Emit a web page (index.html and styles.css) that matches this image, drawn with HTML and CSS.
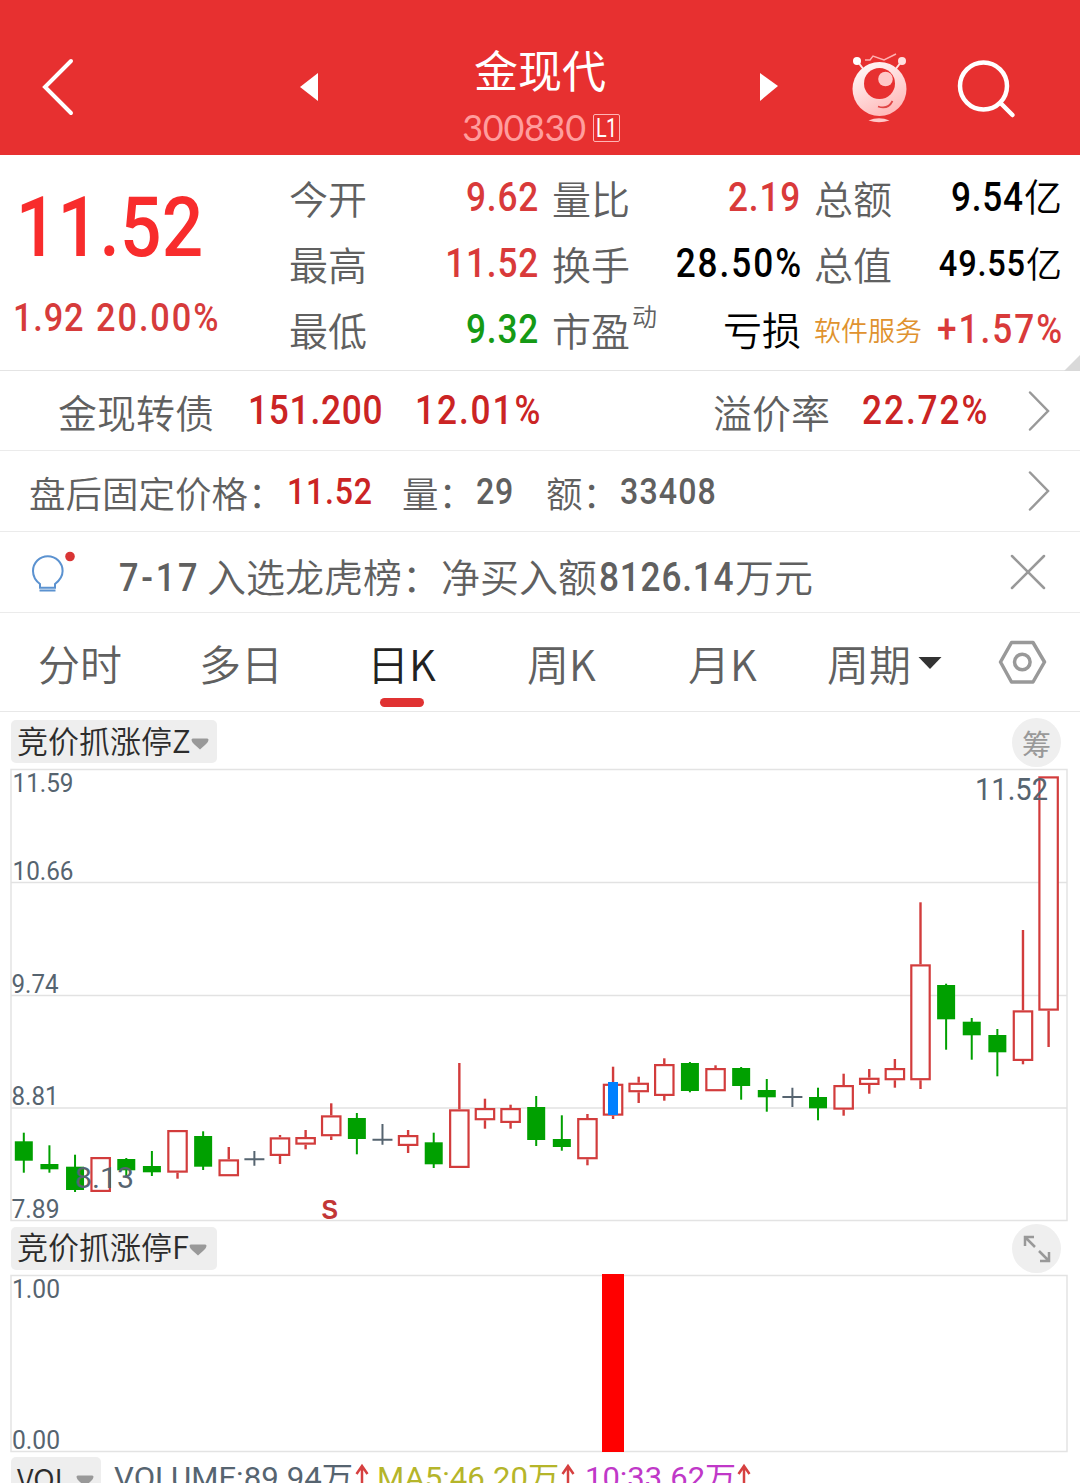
FILE: index.html
```html
<!DOCTYPE html>
<html lang="zh-CN">
<head>
  <meta charset="UTF-8">
  <title>金现代 300830</title>
  <link rel="stylesheet" href="styles.css">
</head>
<body>
  <header class="topbar">
    <svg class="back" width="34" height="58" viewBox="0 0 34 58"><path d="M30 3 L4 29 L30 55"/></svg>
    <svg class="prev" width="20" height="30" viewBox="0 0 20 30"><path d="M19 1 V29 L1 15 Z"/></svg>
    <div class="title">
      <h1>金现代</h1>
      <div class="code">300830<span class="level"><b>L1</b></span></div>
    </div>
    <svg class="next" width="20" height="30" viewBox="0 0 20 30"><path d="M1 1 V29 L19 14 Z"/></svg>
    <svg class="robot" width="56" height="70" viewBox="852 53 56 70">
      <defs>
        <linearGradient id="skin" x1="0" y1="0" x2="0.5" y2="1">
          <stop offset="0" stop-color="#fff"/>
          <stop offset="1" stop-color="#ffbcbc"/>
        </linearGradient>
      </defs>
      <path d="M858 63 L864 71 M901 63 L895 71" fill="none" stroke="#ffe4e4" stroke-width="2"/>
      <path d="M865 61 h5 l3 -4 l11 4 l12 -6" fill="none" stroke="#ffb0b0" stroke-width="1.4"/>
      <circle cx="857" cy="62" r="4" fill="#fff"/>
      <circle cx="902" cy="62" r="4" fill="#ffe0e0"/>
      <circle cx="879.5" cy="90" r="27" fill="url(#skin)"/>
      <circle cx="879.5" cy="84.5" r="15.5" fill="#e73030"/>
      <circle cx="885.5" cy="80" r="7.3" fill="#ffc8c8"/>
      <path d="M878 107.500 Q888 111 892.500 102" fill="none" stroke="#e04545" stroke-width="1.7"/>
      <path d="M868.500 121.500 Q879 117 889.500 121.500 Q879 125 868.500 121.500" fill="#ffc8c8"/>
    </svg>
    <svg class="search" width="60" height="60" viewBox="956 58 60 60"><circle cx="983.500" cy="86" r="23.500"/><path d="M1000.500 103 L1012.500 115"/></svg>
  </header>

  <section class="quote">
    <div class="price">
      <div class="last num">11.52</div>
      <div class="change"><span class="num">1.92</span><span class="num pct">20.00%</span></div>
    </div>
    <dl class="stats">
      <dt>今开</dt><dd class="num up">9.62</dd>
      <dt>量比</dt><dd class="num up">2.19</dd>
      <dt>总额</dt><dd><b class="num">9.54</b><i>亿</i></dd>
      <dt>最高</dt><dd class="num up">11.52</dd>
      <dt>换手</dt><dd class="num pct">28.50%</dd>
      <dt>总值</dt><dd class="small"><b class="num">49.55</b><i>亿</i></dd>
      <dt>最低</dt><dd class="num down">9.32</dd>
      <dt>市盈<sup>动</sup></dt><dd class="cn">亏损</dd>
      <dt class="sector">软件服务</dt><dd class="num pct up">+1.57%</dd>
    </dl>
    <span class="corner"></span>
  </section>

  <section class="row bond">
    <span class="bond-name">金现转债</span>
    <span class="num red bond-price">151.200</span>
    <span class="num pct red bond-pct">12.01%</span>
    <span class="premium">溢价率</span>
    <span class="num pct red premium-pct">22.72%</span>
    <svg class="icon" width="22" height="40" viewBox="0 0 22 40"><path d="M2 1.500 L20 20 L2 38.500"/></svg>
  </section>

  <section class="row after">
    <span class="after-name">盘后固定价格：</span>
    <span class="num red after-price">11.52</span>
    <span class="after-vol">量：</span>
    <span class="num after-vol-num">29</span>
    <span class="after-amt">额：</span>
    <span class="num after-amt-num">33408</span>
    <svg class="icon" width="22" height="40" viewBox="0 0 22 40"><path d="M2 1.500 L20 20 L2 38.500"/></svg>
  </section>

  <section class="row news">
    <svg class="bulb" width="48" height="44" viewBox="30 550 48 44">
      <path d="M40 587.500 V584 C36 581 33 577 33 571 A14.800 14.800 0 0 1 62.600 571 C62.600 577 59 581 55 584 V587.500 M39 587.700 H56 M39.500 590.500 H55.500"/>
      <circle cx="70" cy="556.5" r="4.8"/>
    </svg>
    <span class="num news-date">7-17</span>
    <span class="news-text">入选龙虎榜：净买入额</span>
    <span class="num news-amount">8126.14</span>
    <span>万元</span>
    <svg class="icon" width="36" height="36" viewBox="0 0 36 36"><path d="M2 2 L34 34 M34 2 L2 34"/></svg>
  </section>

  <nav class="tabs">
    <a>分时</a>
    <a>多日</a>
    <a class="active">日<em>K</em></a>
    <a>周<em>K</em></a>
    <a>月<em>K</em></a>
    <a>周期<svg width="24" height="12" viewBox="0 0 24 12"><path d="M0.500 0 H23.500 L12 12 Z" fill="#333"/></svg></a>
    <svg class="settings" width="48" height="44" viewBox="998 640 48 44"><path d="M1011.500 642.500 H1033 L1044.500 662 L1033 682 H1011.500 L1000.500 662 Z"/><circle cx="1022.3" cy="662" r="7.8"/></svg>
  </nav>

  <section class="panel">
    <div class="panel-head first">
      <button class="chip">竞价抓涨停<em>Z</em><svg width="18" height="12" viewBox="0 0 18 12"><path d="M0.500 1.500 Q1 0.500 2 0.500 H16 Q17 0.500 17.500 1.500 Q17.500 4 14 7 L9 11.500 L4 7 Q0.500 4 0.500 1.500"/></svg></button>
      <span class="round">筹</span>
    </div>
    <svg id="kline" width="1080" height="453" viewBox="0 769 1080 453"></svg>
  </section>

  <section class="panel">
    <div class="panel-head second">
      <button class="chip">竞价抓涨停<em>F</em><svg width="18" height="12" viewBox="0 0 18 12"><path d="M0.500 1.500 Q1 0.500 2 0.500 H16 Q17 0.500 17.500 1.500 Q17.500 4 14 7 L9 11.500 L4 7 Q0.500 4 0.500 1.500"/></svg></button>
      <span class="round"><svg width="28" height="28" viewBox="0 0 28 28"><path d="M2 11 V2 H11 M2 2 L12 12 M26 17 V26 H17 M26 26 L16 16"/></svg></span>
    </div>
    <svg id="signal" width="1080" height="180" viewBox="0 1273 1080 180"></svg>
  </section>

  <section class="volume">
    <button class="chip"><em>VOL</em><svg width="18" height="12" viewBox="0 0 18 12"><path d="M0.500 1.500 Q1 0.500 2 0.500 H16 Q17 0.500 17.500 1.500 Q17.500 4 14 7 L9 11.500 L4 7 Q0.500 4 0.500 1.500"/></svg></button>
    <svg id="volume" width="979" height="30" viewBox="101 1453 979 30"></svg>
  </section>

  <script>
    // u = up, d = down, x = unchanged; then high, body top, body bottom, low
    const candles = [
      ["d", 1132.7, 1141.3, 1160.7, 1172.7],
      ["d", 1145.3, 1164, 1169.3, 1172.7],
      ["d", 1154.7, 1166.7, 1190, 1192],
      ["u", 1157, 1157, 1192, 1192],
      ["d", 1158, 1159, 1170.3, 1176],
      ["d", 1151, 1166, 1172.3, 1176],
      ["u", 1130, 1130, 1172.7, 1178.7],
      ["d", 1131.3, 1136, 1166.7, 1170],
      ["u", 1147, 1159.3, 1176.3, 1176.3],
      ["x", 1151, 1159.3, 1159.3, 1165.7],
      ["u", 1135, 1137.3, 1156, 1164],
      ["u", 1130, 1137, 1144.7, 1149.3],
      ["u", 1103.3, 1115.3, 1136.3, 1140],
      ["d", 1113, 1118, 1139, 1154.3],
      ["x", 1124, 1139.7, 1139.7, 1144.7],
      ["u", 1130, 1135, 1146, 1153],
      ["d", 1132.7, 1142.3, 1164.3, 1168],
      ["u", 1063, 1109.3, 1168, 1168],
      ["u", 1098.7, 1108, 1120.3, 1128.7],
      ["u", 1104.7, 1108, 1123, 1128.7],
      ["d", 1096, 1107, 1140, 1146],
      ["d", 1115.3, 1139, 1147, 1150.7],
      ["u", 1114, 1118, 1159.3, 1165.3],
      ["u", 1066.7, 1083.7, 1115.7, 1119],
      ["u", 1076.7, 1082.7, 1092.3, 1103],
      ["u", 1058.3, 1064, 1096, 1100.7],
      ["d", 1062, 1063, 1091, 1092.3],
      ["u", 1065.3, 1068, 1091.3, 1091.3],
      ["d", 1067, 1068, 1086, 1099.7],
      ["d", 1079, 1090, 1097.3, 1111.7],
      ["x", 1087.7, 1097, 1097, 1107],
      ["d", 1087.7, 1097, 1108.3, 1120.3],
      ["u", 1073.7, 1085, 1109.7, 1115.7],
      ["u", 1069, 1077.7, 1085, 1093.7],
      ["u", 1059, 1068, 1080.3, 1087.7],
      ["u", 902.3, 964.3, 1080.3, 1089],
      ["d", 983.7, 985, 1019.3, 1049.7],
      ["d", 1018, 1021.7, 1035.3, 1059.7],
      ["d", 1029, 1035, 1052.3, 1076.3],
      ["u", 930, 1010.3, 1061, 1064.3],
      ["u", 776.3, 776.3, 1010.7, 1047]
    ];

    function rect(x, y, w, h, cls) {
      return `<rect class="${cls}" x="${x}" y="${y}" width="${w}" height="${h}"/>`;
    }
    function text(x, y, w, size, str, cls) {
      return `<text class="${cls}" x="${x}" y="${y}" font-size="${size}" textLength="${w}" lengthAdjust="spacingAndGlyphs">${str}</text>`;
    }

    function drawKline() {
      let out = rect(11, 769.5, 1056, 451, "frame");
      for (const y of [882.5, 995.5, 1108]) {
        out += `<path class="grid" d="M11 ${y} H1067"/>`;
      }
      candles.forEach(([type, high, top, bottom, low], i) => {
        const x = 23.8 + i * 25.62;
        if (type === "d") {
          out += rect(x - 1, high, 2, low - high, "fall") + rect(x - 9, top, 18, bottom - top, "fall");
        } else if (type === "u") {
          out += rect(x - 1.2, high, 2.4, top - high, "wick") + rect(x - 1.2, bottom, 2.4, low - bottom, "wick");
          out += rect(x - 9.2, top + 1.1, 18.4, bottom - top - 2.2, "rise");
        } else {
          out += `<path class="flat" d="M${x} ${high} V${low} M${x - 10} ${top} H${x + 10}"/>`;
        }
      });
      out += rect(608, 1082, 10, 33, "mark");
      out += text(12.5, 792, 61, 25.5, "11.59", "axis");
      out += text(12.5, 880, 61, 25.5, "10.66", "axis");
      out += text(11.5, 993, 47, 25.5, "9.74", "axis");
      out += text(11.5, 1105, 47, 25.5, "8.81", "axis");
      out += text(11.5, 1218, 48, 25.5, "7.89", "axis");
      out += text(75, 1188, 59, 30, "8.13", "axis");
      out += text(975, 800, 73, 31, "11.52", "axis");
      out += text(321.5, 1219, 16.5, 27, "S", "sell");
      document.getElementById("kline").innerHTML = out;
    }

    function drawSignal() {
      let out = rect(11, 1275.5, 1056, 176, "frame");
      out += rect(602, 1274, 22, 178, "bar");
      out += text(12, 1298, 48, 25.5, "1.00", "axis");
      out += text(12, 1449, 48, 25.5, "0.00", "axis");
      document.getElementById("signal").innerHTML = out;
    }

    function drawVolume() {
      let out = text(114, 1488, 239, 29, "VOLUME:89.94万", "axis");
      out += text(377, 1488, 182, 29, "MA5:46.20万", "ma5");
      out += text(585, 1488, 151, 29, "10:33.62万", "ma10");
      for (const x of [362, 568, 744]) {
        out += `<path class="arrow" d="M${x} 1490 V1466 M${x - 5.5} 1474 L${x} 1466 L${x + 5.5} 1474"/>`;
      }
      document.getElementById("volume").innerHTML = out;
    }

    drawKline();
    drawSignal();
    drawVolume();
  </script>
</body>
</html>
```

FILE: styles.css
```css
* {
  box-sizing: border-box;
}

body {
  margin: 0;
  width: 1080px;
  height: 1483px;
  overflow: hidden;
  background: #fff;
  color: #606060;
  font-family: "Noto Sans CJK SC", sans-serif;
  font-weight: 350;
}

svg {
  display: block;
  flex: none;
  overflow: visible;
}

em, i {
  font-style: normal;
}

/* narrow, slightly spaced digits */
.num {
  font-family: Roboto, "Noto Sans CJK SC", sans-serif;
  font-weight: 500;
  letter-spacing: 0.9px;
  white-space: nowrap;
  transform: scaleX(0.88);
  transform-origin: left;
}

.num.pct {
  letter-spacing: 2.2px;
}

.topbar {
  display: flex;
  height: 155px;
  padding-top: 40px;
  background: #e73030;
  color: #fff;
}

.back {
  margin: 18px 0 0 41px;
  fill: none;
  stroke: #fff;
  stroke-width: 4;
  stroke-linecap: round;
}

.prev, .next {
  margin-top: 32px;
  fill: #fff;
}

.prev {
  margin-left: 224px;
}

.title {
  width: 440px;
  text-align: center;
}

.title h1 {
  margin: -2px 0 0 2px;
  font-size: 44px;
  font-weight: 400;
  line-height: 62px;
}

.code {
  display: flex;
  justify-content: center;
  margin: 7px 0 0 4px;
  font: 36px/40px Lato, sans-serif;
  letter-spacing: -0.3px;
  color: #ff9d9d;
}

.level {
  width: 27px;
  height: 28px;
  margin: 7px 0 0 7px;
  border: 1px solid #ffb5b5;
  border-radius: 2px;
  color: #fff;
  font: 26px/27px Roboto, sans-serif;
  letter-spacing: -1px;
}

.level b {
  display: block;
  font-weight: 400;
  transform: scaleX(0.76);
  transform-origin: left;
  margin-left: 2px;
}

.robot {
  margin: 12px 0 0 73px;
}

.search {
  margin: 18px 0 0 48px;
  fill: none;
  stroke: #fff;
  stroke-width: 4.5;
  stroke-linecap: round;
}

.quote {
  position: relative;
  display: flex;
  height: 216px;
  padding-top: 10px;
  border-bottom: 1px solid #e4e4e4;
}

.price {
  width: 289px;
}

.last {
  height: 122px;
  padding-left: 18px;
  font-size: 83px;
  line-height: 125px;
  color: #f82c2c;
}

.num.last {
  letter-spacing: 0.3px;
}

.change {
  display: flex;
  padding-left: 13px;
  font-size: 39px;
  line-height: 63px;
  color: #d63b3b;
}

.change .num:first-child {
  width: 83px;
}

.stats {
  display: grid;
  grid-template-columns: 117px 133px 127px 135px 126px 135px;
  grid-auto-rows: 66px;
  margin: 0;
  line-height: 64px;
}

.stats dt {
  font-size: 39px;
  white-space: nowrap;
}

.stats dt:nth-of-type(3n + 2),
.stats dt:nth-of-type(3n) {
  padding-left: 13px;
}

.stats dd {
  display: flex;
  justify-content: flex-end;
  margin: 0;
  font-size: 40px;
  line-height: 65px;
  color: #000;
}

.stats .num {
  transform-origin: right;
}

.stats .pct {
  margin-right: -2px;
}

.stats i {
  font-size: 38px;
  line-height: 60px;
}

.stats dd.small {
  font-size: 37px;
}

.stats .small i {
  font-size: 36px;
  line-height: 63px;
}

.stats sup {
  font-size: 25px;
  line-height: 0;
  vertical-align: 20px;
  margin-left: 2px;
}

.stats dd.cn {
  font-size: 39px;
  line-height: 63px;
}

.stats .sector {
  font-size: 27px;
  line-height: 66px;
  color: #e0922e;
}

.stats .up {
  color: #d93a3a;
}

.stats .down {
  color: #159a15;
}

.corner {
  position: absolute;
  right: 0;
  bottom: -1px;
  border: 8px solid transparent;
  border-right-color: #d9d9d9;
  border-bottom-color: #d9d9d9;
}

.row {
  display: flex;
  align-items: center;
  height: 81px;
  border-bottom: 1px solid #ebebeb;
  font-size: 39px;
  white-space: nowrap;
}

.row .icon {
  margin-left: auto;
  margin-right: 30px;
  fill: none;
  stroke: #999;
  stroke-width: 2.5;
  stroke-linecap: round;
}

.red {
  color: #cb2424;
}

.bond {
  height: 80px;
  padding-left: 58px;
}

.bond .num {
  font-size: 40px;
}

.bond-price {
  width: 167px;
  margin-left: 34px;
}

.bond-pct {
  width: 298px;
}

.premium {
  width: 149px;
}

.premium-pct {
  width: 126px;
}

.after {
  padding-left: 29px;
  font-size: 36.5px;
}

.after-name, .after-vol, .after-amt {
  margin-top: 2px;
}

.after-name {
  width: 258px;
}

.after-price {
  width: 115px;
}

.after-vol {
  width: 74px;
}

.after-vol-num {
  width: 70px;
}

.after-amt {
  width: 74px;
}

.num.after-amt-num {
  letter-spacing: 1.3px;
}

.news {
  padding-left: 30px;
}

.news span {
  margin-top: 5px;
}

.bulb {
  margin-right: 41px;
}

.bulb path {
  fill: none;
  stroke: #5b92d0;
  stroke-width: 2;
}

.bulb circle {
  fill: #d93535;
}

.news .num {
  margin-top: 11px;
}

.news-date {
  width: 88px;
  font-size: 39px;
}

.num.news-date {
  letter-spacing: 3.2px;
}

.news-text {
  width: 392px;
}

.news-amount {
  width: 136px;
  font-size: 40px;
}

.row.news .icon {
  margin-right: 34px;
}

.tabs {
  display: flex;
  height: 99px;
  border-bottom: 1px solid #e8e8e8;
  font-size: 42px;
  line-height: 104px;
}

.tabs a {
  display: flex;
  align-items: center;
  position: relative;
  width: 161px;
  height: 99px;
  padding-left: 38px;
}

.tabs a:nth-child(3) {
  padding-left: 45px;
}

.tabs a:nth-child(4) {
  padding-left: 44px;
}

.tabs a:nth-child(5) {
  padding-left: 44px;
}

.tabs a:nth-child(6) {
  padding-left: 22px;
}

.tabs a svg {
  margin: 0 0 0 7px;
}

.tabs .active {
  color: #222;
}

.active::after {
  content: "";
  position: absolute;
  left: 58px;
  bottom: 5px;
  width: 44px;
  height: 9px;
  border-radius: 5px;
  background: #e03232;
}

.settings {
  margin: 27px 0 0 32px;
  fill: none;
  stroke: #999;
  stroke-width: 3.5;
  stroke-linejoin: round;
}

.panel-head {
  display: flex;
  justify-content: space-between;
  padding: 0 19px 0 11px;
}

.first {
  height: 57px;
  padding-top: 6px;
}

.second {
  height: 51px;
}

.first .chip {
  margin-top: 2px;
}

.second .chip {
  margin-top: 5px;
}

.chip {
  display: flex;
  align-items: center;
  width: 206px;
  height: 43px;
  padding: 0 0 4px 6px;
  border: 0;
  border-radius: 5px;
  background: #eee;
  color: #2c2c2c;
  font: 350 31px/40px "Noto Sans CJK SC", sans-serif;
}

.second .chip {
  padding-bottom: 5px;
}

.chip svg {
  margin: 8px 0 0 0;
  fill: #999;
}

.round {
  display: flex;
  align-items: center;
  justify-content: center;
  width: 49px;
  height: 49px;
  border-radius: 50%;
  background: #efefef;
  color: #999;
  font-size: 29px;
  font-weight: 400;
}

.second .round {
  margin-top: 2px;
}

.round path {
  fill: none;
  stroke: #999;
  stroke-width: 2.5;
}

.frame {
  fill: none;
  stroke: #e3e3e3;
  stroke-width: 1.5;
}

.grid {
  stroke: #e2e2e2;
  stroke-width: 1.3;
}

.fall {
  fill: #00a000;
}

.wick {
  fill: #d23c3c;
}

.rise {
  fill: #fff;
  stroke: #d23c3c;
  stroke-width: 2.2;
}

.flat {
  fill: none;
  stroke: #566470;
  stroke-width: 2;
}

.mark {
  fill: #0080ff;
}

.bar {
  fill: #f00;
}

.axis, .ma5, .ma10 {
  font-family: Roboto, "Noto Sans CJK SC", sans-serif;
  font-weight: 400;
  fill: #566470;
}

.ma5 {
  fill: #b5b52a;
}

.ma10 {
  fill: #c038c8;
}

.sell {
  font-family: "Liberation Sans", sans-serif;
  font-weight: bold;
  fill: #c23636;
}

.arrow {
  fill: none;
  stroke: #d64040;
  stroke-width: 2.5;
}

.volume {
  display: flex;
  height: 30px;
  padding-left: 11px;
}

.volume .chip {
  flex: none;
  width: 90px;
  margin-top: 4px;
  font-size: 29px;
}

.volume .chip svg {
  margin-left: 6px;
}
```
